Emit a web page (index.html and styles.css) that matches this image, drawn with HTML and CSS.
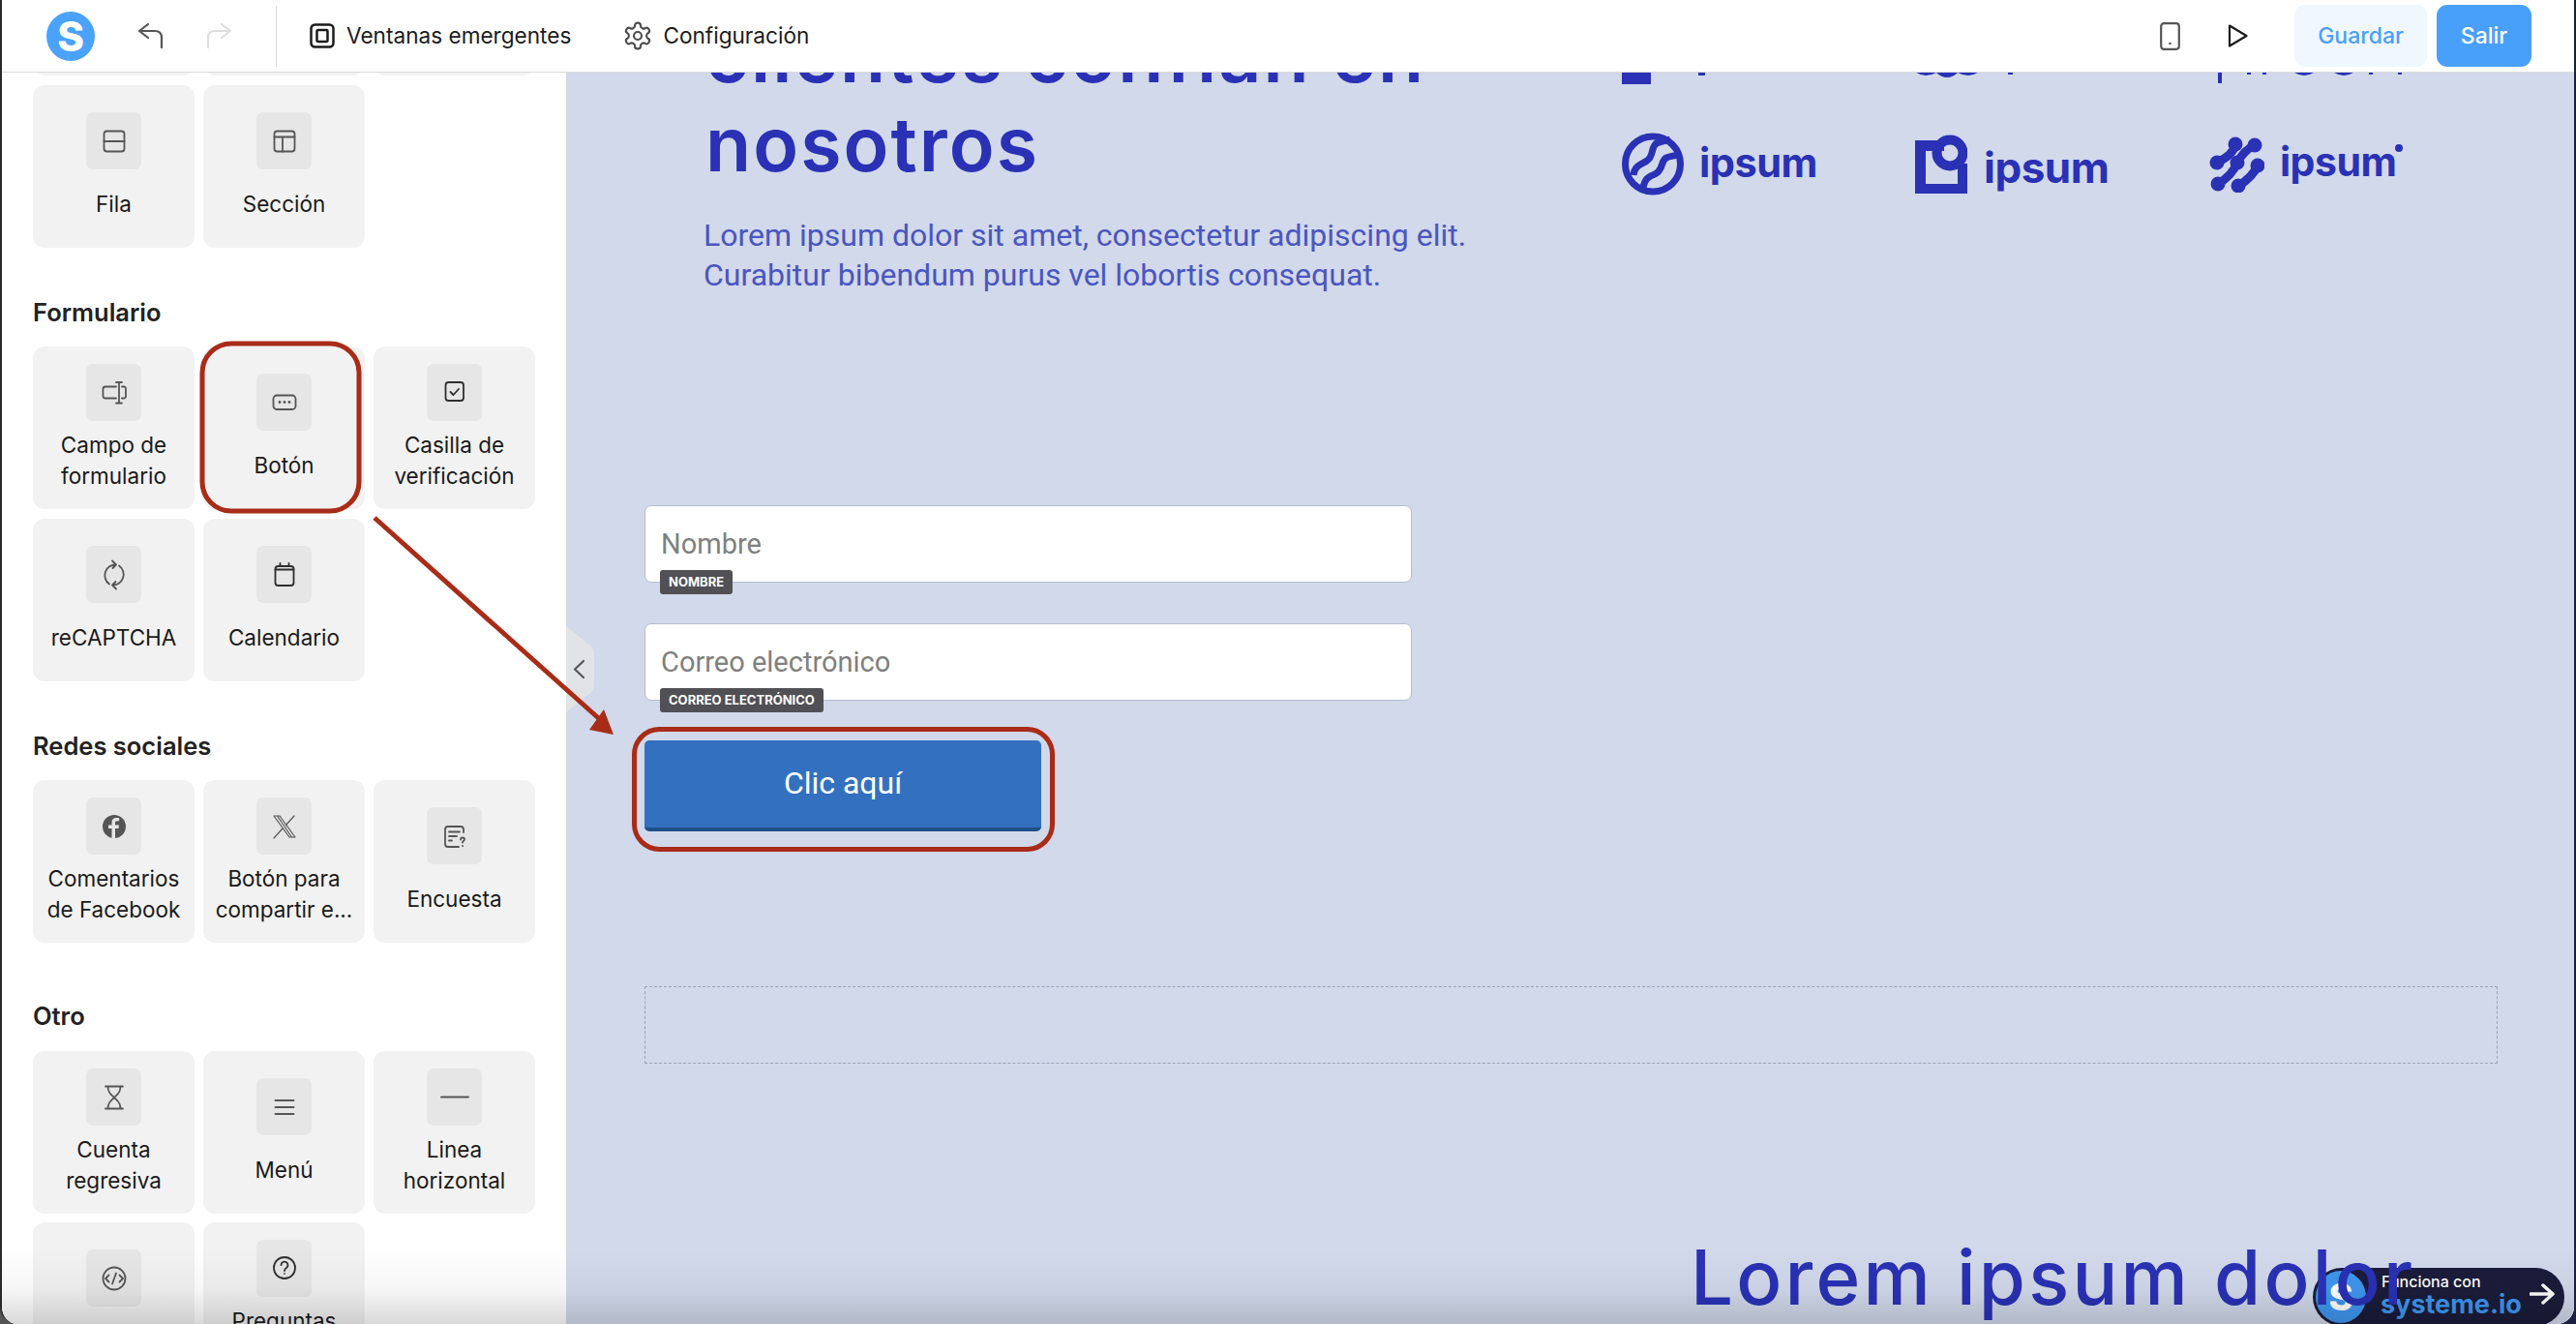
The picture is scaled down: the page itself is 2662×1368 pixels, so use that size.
FILE: index.html
```html
<!DOCTYPE html>
<html lang="es">
<head>
<meta charset="utf-8">
<title>Editor</title>
<link rel="stylesheet" href="styles.css">
</head>
<body>
<div class="window">
  <header class="topbar">
    <div class="brand">S</div>
    <svg class="tool undo" viewBox="0 0 26 26"><path d="M10 1 1 8l9 7M1 8h16q7 0 7 7v10"/></svg>
    <svg class="tool redo" viewBox="0 0 26 26"><path d="M16 1l9 7-9 7M25 8H9q-7 0-7 7v10"/></svg>
    <div class="divider"></div>
    <a class="navitem nav-first"><svg class="navicon" viewBox="0 0 26 26"><rect class="thick" x="1.5" y="1.5" width="23" height="23" rx="4"/><rect class="thick" x="7.5" y="7" width="11" height="12" rx="1.5"/></svg><span class="navtext">Ventanas emergentes</span></a>
    <a class="navitem nav-second"><svg class="navicon gear" viewBox="0 0 24 24"><path d="M12.22 2h-.44a2 2 0 0 0-2 2v.18a2 2 0 0 1-1 1.73l-.43.25a2 2 0 0 1-2 0l-.15-.08a2 2 0 0 0-2.73.73l-.22.38a2 2 0 0 0 .73 2.73l.15.1a2 2 0 0 1 1 1.72v.51a2 2 0 0 1-1 1.74l-.15.09a2 2 0 0 0-.73 2.73l.22.38a2 2 0 0 0 2.73.73l.15-.08a2 2 0 0 1 2 0l.43.25a2 2 0 0 1 1 1.73V20a2 2 0 0 0 2 2h.44a2 2 0 0 0 2-2v-.18a2 2 0 0 1 1-1.73l.43-.25a2 2 0 0 1 2 0l.15.08a2 2 0 0 0 2.73-.73l.22-.39a2 2 0 0 0-.73-2.73l-.15-.08a2 2 0 0 1-1-1.74v-.5a2 2 0 0 1 1-1.74l.15-.09a2 2 0 0 0 .73-2.73l-.22-.38a2 2 0 0 0-2.73-.73l-.15.08a2 2 0 0 1-2 0l-.43-.25a2 2 0 0 1-1-1.73V4a2 2 0 0 0-2-2z"/><circle cx="12" cy="12" r="3"/></svg><span class="navtext">Configuración</span></a>
    <div class="spacer"></div>
    <svg class="tool device" viewBox="0 0 21 29"><rect x="1.2" y="1.2" width="18.6" height="26.6" rx="3"/><circle class="solid" cx="10.5" cy="22" r="1.3"/></svg>
    <svg class="tool play" viewBox="0 0 21 26"><path d="M2 2.5 19.5 13 2 23.5z"/></svg>
    <button class="btn btn-save">Guardar</button>
    <button class="btn btn-exit">Salir</button>
  </header>

  <div class="workspace">
    <aside class="sidebar">
      <div class="panel">
        <div class="grid">
          <div class="card"></div><div class="card"></div><div class="card"></div>
          <div class="card card-one">
            <div class="tile"><svg class="gl" viewBox="0 0 34 34"><rect x="6.5" y="6.5" width="21" height="21" rx="3"/><path d="M6.5 17h21"/></svg></div>
            <div class="label">Fila</div>
          </div>
          <div class="card card-one">
            <div class="tile"><svg class="gl" viewBox="0 0 34 34"><rect x="6.5" y="6.5" width="21" height="21" rx="3"/><path d="M6.5 12.5h21M15 12.5v15"/></svg></div>
            <div class="label">Sección</div>
          </div>
        </div>

        <h3 class="title">Formulario</h3>
        <div class="grid">
          <div class="card">
            <div class="tile"><svg class="gl" viewBox="0 0 34 34"><path d="M19 10.5H8A2.5 2.5 0 0 0 5.5 13v7A2.5 2.5 0 0 0 8 22.5h11M25 10.5h2a2 2 0 0 1 2 2.5v7a2 2 0 0 1-2 2.500h-2M19 6h6M19 27.5h6M22 6v21.5"/></svg></div>
            <div class="label">Campo de<br>formulario</div>
          </div>
          <div class="card card-one">
            <div class="tile"><svg class="gl" viewBox="0 0 34 34"><rect x="5.5" y="9.5" width="23" height="14.5" rx="3.5"/><circle class="solid" cx="12" cy="16.5" r="1.4"/><circle class="solid" cx="17" cy="16.5" r="1.4"/><circle class="solid" cx="22" cy="16.5" r="1.4"/></svg></div>
            <div class="label">Botón</div>
          </div>
          <div class="card">
            <div class="tile"><svg class="gl gl-dark" viewBox="0 0 34 34"><rect x="7.5" y="6" width="18.5" height="19" rx="3"/><path d="m12.5 16 3 3 5.5-6"/></svg></div>
            <div class="label">Casilla de<br>verificación</div>
          </div>
          <div class="card card-one">
            <div class="tile"><svg class="gl" viewBox="0 0 34 34"><path d="M19 6.5A11 11 0 0 0 12 26.5M15 2.5l4 4-3.5 3.5M15 27.5A11 11 0 0 0 22 7.5M19 31.5l-4-4 3.5-3.5"/></svg></div>
            <div class="label">reCAPTCHA</div>
          </div>
          <div class="card card-one">
            <div class="tile"><svg class="gl gl-dark" viewBox="0 0 34 34"><rect x="7.5" y="8" width="19" height="20" rx="3"/><path d="M7.5 11.5h19M12.5 5v3M21.5 5v3"/></svg></div>
            <div class="label">Calendario</div>
          </div>
        </div>

        <h3 class="title">Redes sociales</h3>
        <div class="grid">
          <div class="card">
            <div class="tile"><svg class="gl" viewBox="0 0 34 34"><circle class="solid" cx="17" cy="17" r="12"/><path class="cut" d="M18 29V19h3.5l.5-3.5h-4v-2.3c0-1.200.6-2 2-2h2.200V8.300c-1-.2-2-.3-3-.3-3 0-4.700 1.800-4.700 4.800v2.700H11V19h3.500v10z"/></svg></div>
            <div class="label">Comentarios<br>de Facebook</div>
          </div>
          <div class="card">
            <div class="tile"><svg class="gl gl-thin" viewBox="0 0 34 34"><path d="M6 6h6l16 22h-6zM9.5 6l15 22M27 6 18.5 15.5M15 19 6 29"/></svg></div>
            <div class="label">Botón para<br>compartir e...</div>
          </div>
          <div class="card card-mid">
            <div class="tile"><svg class="gl" viewBox="0 0 34 34"><path d="M26 13V10a3 3 0 0 0-3-3H10a3 3 0 0 0-3 3v15a3 3 0 0 0 3 3h11M11 12.5h11M11 17h8M11 21.5h3"/><path d="M23 20.5q0-2 2-2t2 1.800q0 1-1.200 1.700-.8.500-.8 1.500"/><circle class="solid" cx="25" cy="27" r="1"/></svg></div>
            <div class="label">Encuesta</div>
          </div>
        </div>

        <h3 class="title title-wide">Otro</h3>
        <div class="grid grid-tight">
          <div class="card">
            <div class="tile"><svg class="gl" viewBox="0 0 34 34"><path d="M8 5.5h18M8 28.5h18M10.5 5.5c0 7 3.500 8.500 6.500 11.500-3 3-6.500 4.500-6.500 11.500M23.500 5.5c0 7-3.500 8.500-6.500 11.500 3 3 6.500 4.500 6.500 11.500"/></svg></div>
            <div class="label">Cuenta<br>regresiva</div>
          </div>
          <div class="card card-mid">
            <div class="tile"><svg class="gl" viewBox="0 0 34 34"><path d="M7.5 10h19M7.5 17h19M7.5 24h19"/></svg></div>
            <div class="label">Menú</div>
          </div>
          <div class="card">
            <div class="tile"><svg class="gl" viewBox="0 0 34 34"><path d="M3 16.5h28"/></svg></div>
            <div class="label">Linea<br>horizontal</div>
          </div>
          <div class="card card-one">
            <div class="tile"><svg class="gl" viewBox="0 0 34 34"><circle cx="17" cy="17" r="11.5"/><path d="m11.5 13.5-3.500 3.500 3.500 3.500M22.500 13.500l3.500 3.500-3.500 3.500M19 11.500l-4 11"/></svg></div>
            <div class="label">HTML</div>
          </div>
          <div class="card">
            <div class="tile"><svg class="gl gl-dark" viewBox="0 0 34 34"><circle cx="17" cy="16" r="11"/><path d="M13.5 13a3.500 3.500 0 1 1 5.500 3c-1.300.8-2 1.500-2 3"/><circle class="solid" cx="17" cy="22" r="1"/></svg></div>
            <div class="label">Preguntas<br>frecuentes</div>
          </div>
        </div>
      </div>
    </aside>

    <main class="canvas">
      <section class="hero">
        <div class="hero-copy">
          <h1 class="headline">clientes confían en<br>nosotros</h1>
          <p class="lead">Lorem ipsum dolor sit amet, consectetur adipiscing elit.<br>Curabitur bibendum purus vel lobortis consequat.</p>
        </div>
        <div class="logos">
          <svg class="partial" viewBox="0 0 200 65"><path d="M0 47h14l16-4v21H0z"/><rect x="79" y="49" width="7" height="6"/></svg>
          <svg class="partial" viewBox="0 0 200 65"><path d="M0 46h66v5q-5 4-11 4t-11-3q-5 5-11 5t-11-5q-5 3-11 3T0 51z"/><rect x="96" y="46" width="5" height="8"/></svg>
          <svg class="partial" viewBox="0 0 200 65"><rect x="9" y="44" width="4" height="19"/><rect x="39" y="44" width="4" height="10"/><rect x="55" y="44" width="4" height="10"/><path d="M88 48q10 8 20 0v4q-10 6-20 0zM129 48q10 8 20 0v4q-10 6-20 0z"/><rect x="165" y="44" width="4" height="10"/><rect x="195" y="44" width="4" height="10"/></svg>
          <div class="logo">
            <svg class="mark mark-a" viewBox="0 0 64 65"><circle cx="32" cy="32.5" r="28.5"/><path d="M12 44C13 34 20 33 26 29 33 25 30 14 36 11 40 9 44 9 50 7M22 58C23 48 28 45 34 43 43 39 40 29 46 26 50 24 54 24 60 23"/></svg>
            <span class="word word-a">ipsum</span>
          </div>
          <div class="logo">
            <svg class="mark mark-b" viewBox="0 0 54 61"><path class="fill" fill-rule="evenodd" d="M0 6h30v11H11v34h33V30h10v31H0z"/><circle cx="36" cy="19" r="13.5"/></svg>
            <span class="word word-b">ipsum</span>
          </div>
          <div class="logo">
            <svg class="mark mark-c" viewBox="0 0 57 58"><path d="M27 8Q25 19 8 27M47 9Q36 14 29 27 24 40 9 49M50 30Q45 42 30 51"/><circle cx="27" cy="8" r="7.5"/><circle cx="47" cy="9" r="7.5"/><circle cx="8" cy="27" r="7.5"/><circle cx="29" cy="27" r="7.5"/><circle cx="50" cy="30" r="7.5"/><circle cx="9" cy="49" r="7.5"/><circle cx="30" cy="51" r="7.5"/></svg>
            <span class="word word-c">ipsum<i class="tm"></i></span>
          </div>
        </div>
      </section>

      <form class="signup">
        <div class="field"><span class="placeholder">Nombre</span><span class="tag">NOMBRE</span></div>
        <div class="field"><span class="placeholder">Correo electrónico</span><span class="tag">CORREO ELECTRÓNICO</span></div>
        <button type="button" class="cta">Clic aquí</button>
      </form>

      <div class="dropzone"></div>
      <h2 class="closing">Lorem ipsum dolor</h2>

      <svg class="collapse" viewBox="0 0 29 89"><path class="collapse-bg" d="M0 0 24 19q5 4 5 10v31q0 6-5 10L0 89z"/><path class="collapse-chev" d="M18 36 9 44.5l9 8.5"/></svg>

      <div class="powered">
        <span class="powered-logo">S</span>
        <span class="powered-text"><span class="powered-small">Funciona con</span><span class="powered-big">systeme.io</span></span>
        <svg class="powered-arrow" viewBox="0 0 26 22"><path d="M1 11h23M14 2l10 9-10 9"/></svg>
      </div>
    </main>
  </div>

  <div class="vignette"></div>

  <svg class="notes" viewBox="0 0 2662 1368">
    <rect x="209" y="355" width="162" height="173" rx="30"/>
    <rect x="655.5" y="753.5" width="432" height="124" rx="26"/>
    <path d="M387 535 624 747"/>
    <path class="notes-head" d="M634 759 624 733 609 754z"/>
  </svg>
</div>
</body>
</html>
```

FILE: styles.css
```css
* { box-sizing: border-box; }
html, body { margin: 0; height: 100%; }
body {
  width: 2662px;
  height: 1368px;
  overflow: hidden;
  background: linear-gradient(90deg, #555 0 50%, #1b2140 50%);
  font-family: "Inter", "Liberation Sans", sans-serif;
}
.window {
  position: relative;
  display: flex;
  flex-direction: column;
  width: 2660px;
  height: 1368px;
  background: #fff;
  border-left: 2px solid #2a2a2a;
  border-radius: 0 0 18px 18px;
  overflow: hidden;
}

/* top bar */
.topbar {
  position: relative;
  z-index: 5;
  flex: none;
  display: flex;
  align-items: center;
  height: 75px;
  padding-left: 46px;
  background: #fff;
  border-bottom: 1px solid #dcdcdc;
}
.brand {
  width: 50px;
  height: 51px;
  border-radius: 50%;
  background: #4aa2fb;
  color: #fff;
  font-size: 42px;
  font-weight: 800;
  line-height: 51px;
  text-align: center;
}
.tool { fill: none; stroke-linecap: round; stroke-linejoin: round; stroke-width: 2.2; }
.undo { width: 26px; height: 26px; margin-left: 45px; stroke: #555; }
.redo { width: 26px; height: 26px; margin-left: 44px; stroke: #dedede; }
.divider { width: 1px; height: 63px; margin-left: 46px; background: #dcdcdc; }
.navitem {
  display: flex;
  align-items: center;
  gap: 12px;
  font-size: 22.6px;
  color: #1c1c1c;
}
.navtext { margin-top: -2px; }
.nav-first { margin-left: 34px; }
.nav-second { margin-left: 53px; gap: 10px; }
.navicon { width: 26px; height: 26px; fill: none; stroke: #1c1c1c; stroke-width: 2; }
.thick { stroke-width: 2.5; }
.gear { width: 32px; height: 32px; stroke: #4d4d4d; stroke-width: 1.6; }
.spacer { flex: 1; }
.device { width: 21px; height: 29px; stroke: #555; margin-right: 49px; }
.device .solid { fill: #555; stroke: none; }
.play { width: 21px; height: 26px; stroke: #1c1c1c; margin-right: 48px; }
.btn {
  height: 64px;
  border: 0;
  border-radius: 11px;
  font-family: inherit;
  font-size: 23px;
  font-weight: 500;
}
.btn-save { width: 137px; background: #f0f7ff; color: #4aa0fb; }
.btn-exit { width: 98px; margin: 0 44px 0 10px; background: #49a0fb; color: #fff; }

/* layout */
.workspace { flex: 1; min-height: 0; display: flex; }
.sidebar { flex: none; width: 583px; overflow: hidden; background: #fff; }
.panel { margin-top: -165px; padding-left: 32px; }
.grid {
  display: grid;
  grid-template-columns: repeat(3, 167px);
  grid-auto-rows: 168px;
  column-gap: 9px;
  row-gap: 10px;
}
.grid-tight { row-gap: 9px; }
.title {
  height: 36px;
  margin: 49px 0 17px;
  font-size: 25.5px;
  line-height: 36px;
  font-weight: 600;
  color: #222;
}
.title-wide { margin: 58px 0 18px; }
.card {
  display: flex;
  flex-direction: column;
  align-items: center;
  padding-top: 18px;
  border-radius: 12px;
  background: #f2f2f2;
}
.card-one { padding-top: 28px; }
.card-mid { padding-top: 28px; }
.tile {
  flex: none;
  display: flex;
  align-items: center;
  justify-content: center;
  width: 57px;
  height: 59px;
  border-radius: 7px;
  background: #e6e6e6;
}
.gl {
  width: 34px;
  height: 34px;
  fill: none;
  stroke: #555;
  stroke-width: 1.8;
  stroke-linecap: round;
  stroke-linejoin: round;
}
.gl-dark { stroke: #2e2e2e; }
.gl-thin { stroke-width: 1.2; }
.gl .solid { fill: currentColor; color: #555; stroke: none; }
.gl .cut { fill: #e6e6e6; stroke: none; }
.label {
  margin-top: 9px;
  font-size: 22.5px;
  line-height: 32px;
  text-align: center;
  color: #1a1a1a;
  white-space: nowrap;
}
.card-one .label, .card-mid .label { margin-top: 20px; }

/* canvas */
.canvas {
  position: relative;
  flex: 1;
  min-width: 0;
  overflow: hidden;
  background: #d1d9eb;
}
.hero { display: flex; margin-top: -64px; padding-left: 144px; }
.hero-copy { flex: none; width: 947px; }
.headline {
  margin: 0;
  font-size: 77px;
  line-height: 92px;
  font-weight: 600;
  letter-spacing: 2.1px;
  color: #2a31b5;
  white-space: nowrap;
}
.lead {
  margin: 28px 0 0 -2px;
  font-family: "Roboto", sans-serif;
  font-size: 32px;
  line-height: 41px;
  color: #4b55c0;
  white-space: nowrap;
}
.logos {
  display: grid;
  grid-template-columns: 303px 304px 200px;
  grid-auto-rows: 65px;
  row-gap: 49px;
  margin-top: 12px;
  align-items: center;
}
.partial { width: 200px; height: 65px; fill: #2a31b5; }
.logo { display: flex; align-items: center; gap: 16px; color: #2a31b5; }
.mark-a { width: 64px; height: 65px; fill: none; stroke: #2a31b5; stroke-width: 7; }
.mark-b { width: 54px; height: 61px; }
.mark-b .fill { fill: #2a31b5; }
.mark-b circle { fill: none; stroke: #2a31b5; stroke-width: 10; }
.mark-c { flex: none; width: 57px; height: 58px; fill: #2a31b5; stroke: none; }
.mark-c path { fill: none; stroke: #2a31b5; stroke-width: 9; stroke-linecap: round; stroke-linejoin: round; }
.word { font-weight: 700; line-height: 1; letter-spacing: -0.5px; }
.word-a { margin-top: -2px; font-size: 41.5px; }
.word-b { margin: 6px 0 0 1px; font-size: 44px; }
.word-c { position: relative; margin-top: -4px; font-size: 41px; }
.tm {
  position: absolute;
  top: 2px;
  right: -7px;
  width: 8px;
  height: 8px;
  border-radius: 50%;
  background: #2a31b5;
}

.signup {
  display: flex;
  flex-direction: column;
  align-items: flex-start;
  gap: 42px;
  width: 793px;
  margin: 217px 0 0 81px;
}
.field {
  position: relative;
  display: flex;
  align-items: center;
  width: 100%;
  height: 80px;
  padding: 0 0 1px 16px;
  border: 1px solid #b3bdd0;
  border-radius: 7px;
  background: #fff;
}
.placeholder { font-family: "Roboto", sans-serif; font-size: 29px; color: #808080; }
.tag {
  position: absolute;
  left: 15px;
  top: 66px;
  height: 25px;
  padding: 0 9px;
  border-radius: 3px;
  background: #505055;
  color: #fff;
  font-size: 13px;
  font-weight: 700;
  line-height: 25px;
  white-space: nowrap;
}
.cta {
  width: 410px;
  height: 94px;
  margin-top: -1px;
  padding: 0 0 2px;
  border: 0;
  border-bottom: 4px solid #1f4f87;
  border-radius: 5px;
  background: #3371c0;
  color: #fff;
  font-family: "Roboto", sans-serif;
  font-size: 32px;
}
.dropzone {
  width: 1915px;
  height: 80px;
  margin: 160px 0 0 81px;
  border: 1px dashed #9aa3b5;
}
.closing {
  position: relative;
  z-index: 2;
  margin: 175px 0 0 1162px;
  font-size: 78px;
  line-height: 92px;
  font-weight: 500;
  letter-spacing: 3.2px;
  color: #2a31b5;
  white-space: nowrap;
}
.collapse { position: absolute; left: 0; top: 572px; width: 29px; height: 89px; }
.collapse-bg { fill: #e1e3e6; }
.collapse-chev { fill: none; stroke: #555; stroke-width: 2.2; stroke-linecap: round; stroke-linejoin: round; }
.powered {
  position: absolute;
  right: 10px;
  top: 1235px;
  display: flex;
  align-items: center;
  width: 260px;
  height: 60px;
  padding-left: 3px;
  border-radius: 30px;
  background: #1a1c3a;
}
.powered-logo {
  flex: none;
  width: 52px;
  height: 54px;
  border-radius: 50%;
  background: #3f96ee;
  color: #fff;
  font-size: 38px;
  font-weight: 800;
  line-height: 54px;
  text-align: center;
}
.powered-text { display: flex; flex-direction: column; margin: -2px 0 0 16px; }
.powered-small { font-size: 16px; line-height: 18px; font-weight: 500; color: #fff; }
.powered-big { margin-left: -1px; font-size: 27px; line-height: 30px; font-weight: 700; color: #3f96ee; }
.powered-arrow {
  width: 26px;
  height: 22px;
  margin: -6px 0 0 8px;
  fill: none;
  stroke: #fff;
  stroke-width: 3.5;
  stroke-linecap: round;
  stroke-linejoin: round;
}
.vignette {
  position: absolute;
  z-index: 6;
  left: 0;
  right: 0;
  bottom: 0;
  height: 80px;
  background: linear-gradient(180deg, rgba(0, 0, 0, 0), rgba(0, 0, 0, .035) 55%, rgba(0, 0, 0, .15));
  pointer-events: none;
}
.notes {
  position: absolute;
  z-index: 7;
  left: -2px;
  top: 0;
  width: 2662px;
  height: 1368px;
  fill: none;
  stroke: #a82c17;
  stroke-width: 5;
  pointer-events: none;
}
.notes-head { fill: #a82c17; stroke: none; }
```
